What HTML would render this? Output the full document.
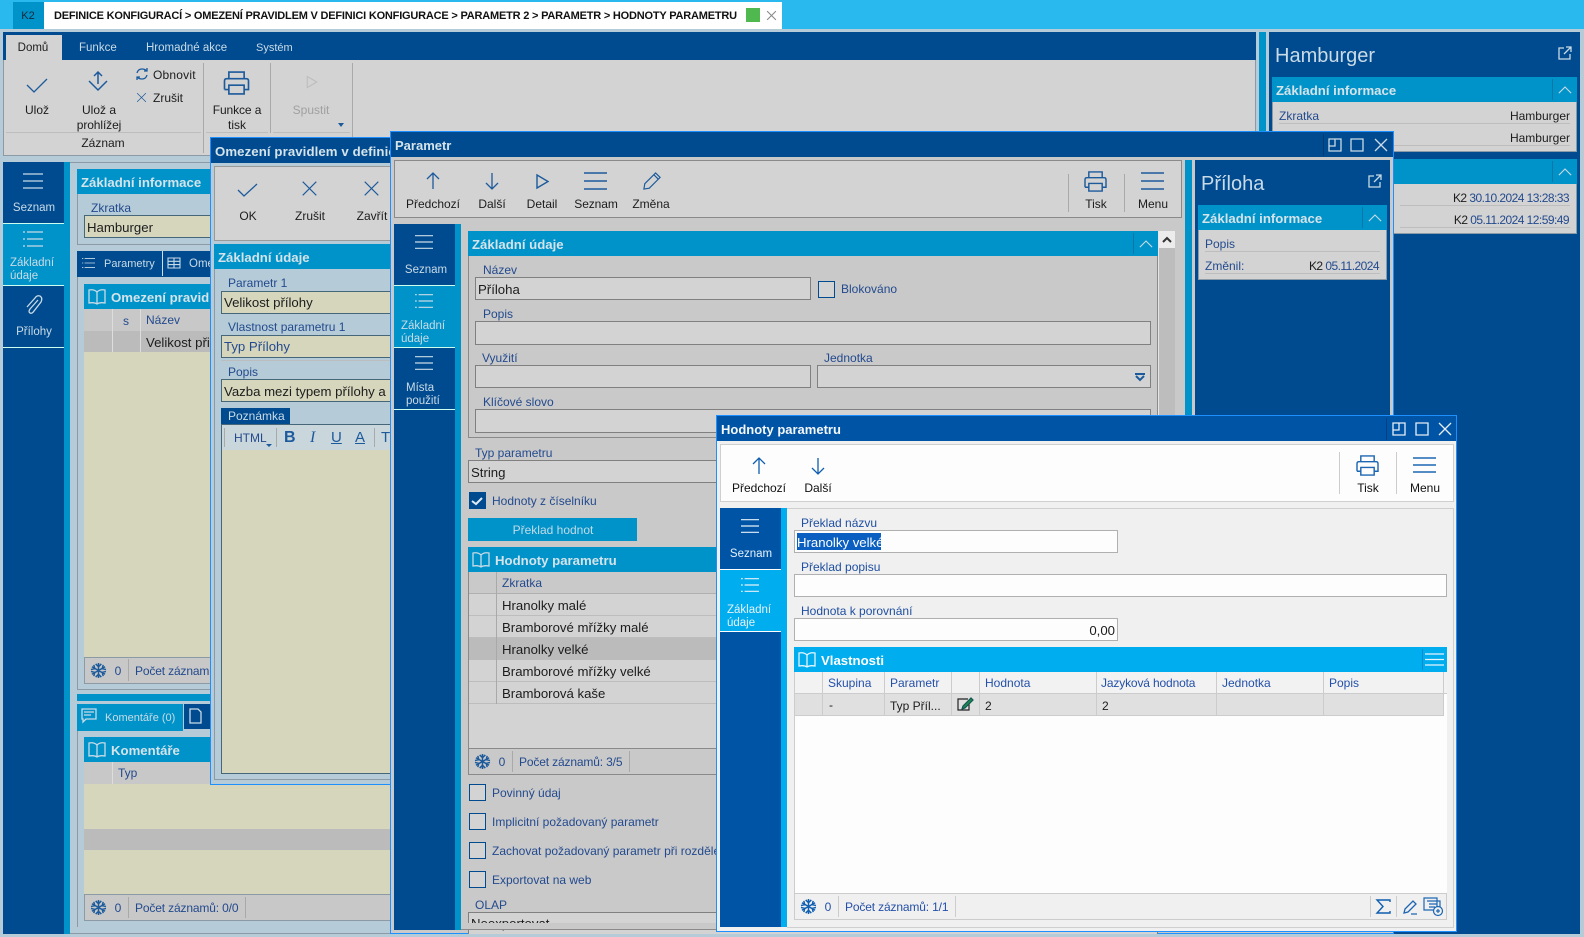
<!DOCTYPE html>
<html lang="cs"><head><meta charset="utf-8"><title>K2</title>
<style>
html,body{margin:0;padding:0;width:1584px;height:937px;overflow:hidden;background:#b5cbd7;font-family:"Liberation Sans",sans-serif}
div,span.t{position:absolute;box-sizing:border-box}
.w{left:0;top:0;width:1584px;height:937px}
.t{position:absolute;white-space:nowrap;font-size:12px;line-height:16px;color:#1c1c1c}
.c{transform:translateX(-50%)}
.r{transform:translateX(-100%)}
.l{color:#234a8e}
.hw{color:#c9dbe6}
.h{font-weight:bold;font-size:13.2px;color:#d5e3ea;margin-top:1px}
.v{font-size:13.2px}
.n{letter-spacing:-.55px}
.f{letter-spacing:-.15px}
svg{position:absolute;overflow:visible;fill:none;stroke:#1c5a9c;stroke-width:1.3}
.wt{stroke:#c9dbe6}
.wh{stroke:#fff}
.sn{stroke-width:1.6}
.in{background:#d6d6bd;border:1px solid #46677a}
.ig{background:#d3d3d3;border:1px solid #808080}
.iw{background:#fdfdfd;border:1px solid #b0b0b0}
.cy{background:#0093c9}
.db{background:#004a8f}
.ck{width:17px;height:17px;background:#d3d3d3;border:1px solid #004a8f}
.ln{height:1px;background:#bdbdbd}
.v1{width:1px;background:#a9a9a9}
</style></head><body>
<svg width="0" height="0" style="position:absolute"><defs>
<symbol id="check" viewBox="0 0 20 20" overflow="visible"><path d="M0 9 L7 16 L20 3"/></symbol>
<symbol id="x" viewBox="0 0 20 20" overflow="visible"><path d="M2 2 L18 18 M18 2 L2 18"/></symbol>
<symbol id="up" viewBox="0 0 20 20" overflow="visible"><path d="M10 1 V18 M4 7 L10 1 L16 7"/></symbol>
<symbol id="down" viewBox="0 0 20 20" overflow="visible"><path d="M10 1 V18 M4 12 L10 18 L16 12"/></symbol>
<symbol id="play" viewBox="0 0 20 20" overflow="visible"><path d="M4 3 L16 10 L4 17 Z"/></symbol>
<symbol id="ham" viewBox="0 0 20 20" overflow="visible"><path d="M0 3 H20 M0 10 H20 M0 17 H20"/></symbol>
<symbol id="list" viewBox="0 0 20 20" overflow="visible"><path d="M4 3 H20 M4 10 H20 M4 17 H20 M0 3 H2 M0 10 H2 M0 17 H2"/></symbol>
<symbol id="pen" viewBox="0 0 20 20" overflow="visible"><path d="M1 19 L2 13 L14 1 L19 6 L7 18 Z M12 3 L17 8"/></symbol>
<symbol id="print" viewBox="0 0 24 22" overflow="visible"><path d="M5 7 V1 H19 V7 M1 17 V9 Q1 7 3 7 H21 Q23 7 23 9 V17 H19 M5 17 H1 M5 13 H19 V21 H5 Z"/></symbol>
<symbol id="pop" viewBox="0 0 14 14" overflow="visible"><path d="M6 2 H1 V13 H12 V8 M8 1 H13 V6 M13 1 L6 8"/></symbol>
<symbol id="chev" viewBox="0 0 14 8" overflow="visible"><path d="M0 7 L7 0 L14 7"/></symbol>
<symbol id="book" viewBox="0 0 18 17" overflow="visible"><path d="M9 3 Q6 0 1 1 V14 Q6 13 9 15 Q12 13 17 14 V1 Q12 0 9 3 V15"/></symbol>
<symbol id="snow" viewBox="0 0 16 16" overflow="visible"><path d="M8 0 V16 M1 4 L15 12 M15 4 L1 12 M5 1 L8 4 L11 1 M5 15 L8 12 L11 15 M0 7 L4 6 L3 2 M16 7 L12 6 L13 2 M0 9 L4 10 L3 14 M16 9 L12 10 L13 14"/></symbol>
</defs></svg>

<!-- top bar -->
<div style="left:0;top:0;width:1584px;height:29px;background:#29b9ee"></div>
<div style="left:13px;top:2px;width:31px;height:27px;background:#0093c9"></div>
<span class="t c" style="left:28px;top:8px;font-size:11px;color:#0b2a40">K2</span>
<div style="left:44px;top:2px;width:738px;height:27px;background:#fff"></div>
<span class="t" style="left:54px;top:8px;font-weight:bold;font-size:11px;color:#111;letter-spacing:-.2px">DEFINICE KONFIGURACÍ &gt; OMEZENÍ PRAVIDLEM V DEFINICI KONFIGURACE &gt; PARAMETR 2 &gt; PARAMETR &gt; HODNOTY PARAMETRU</span>
<div style="left:746px;top:8px;width:14px;height:14px;background:#4fb84f"></div>
<svg style="left:766px;top:10px;stroke:#8a8a8a;stroke-width:2" width="11" height="11"><use href="#x"/></svg>

<!-- ribbon -->
<div class="db" style="left:3px;top:32px;width:1253px;height:28px"></div>
<div style="left:6px;top:35px;width:56px;height:25px;background:#d3d3d3"></div>
<span class="t c" style="left:33px;top:40px;font-size:11.5px">Domů</span>
<span class="t hw" style="left:79px;top:40px;font-size:11.5px">Funkce</span>
<span class="t hw" style="left:146px;top:40px;font-size:11.5px">Hromadné akce</span>
<span class="t hw" style="left:256px;top:40px;font-size:11px">Systém</span>
<div style="left:3px;top:60px;width:1253px;height:96px;background:#d3d3d3;border:1px solid #8b9aa4;border-top:0"></div>
<div class="v1" style="left:203px;top:63px;height:90px"></div>
<div class="v1" style="left:270px;top:63px;height:70px"></div>
<div class="v1" style="left:352px;top:63px;height:90px"></div>
<div class="ln" style="left:6px;top:132px;width:195px"></div>
<div class="ln" style="left:206px;top:132px;width:62px"></div>
<div class="ln" style="left:273px;top:132px;width:77px"></div>
<svg style="left:27px;top:76px" width="20" height="20"><use href="#check"/></svg>
<span class="t c" style="left:37px;top:102px">Ulož</span>
<svg style="left:88px;top:71px;stroke-width:1.5" width="20" height="20"><path d="M10 1 V13 M6 5 L10 1 L14 5 M1 10 L10 19 L19 10"/></svg>
<span class="t c" style="left:99px;top:102px">Ulož a</span>
<span class="t c" style="left:99px;top:117px;letter-spacing:-.1px">prohlížej</span>
<svg style="left:136px;top:68px" width="12" height="12"><path d="M1 5 Q2 1 6 1 Q9 1 11 3 M11 0 V3 H8 M11 7 Q10 11 6 11 Q3 11 1 9 M1 12 V9 H4"/></svg>
<span class="t" style="left:153px;top:67px;letter-spacing:.2px">Obnovit</span>
<svg style="left:136px;top:92px" width="11" height="11"><use href="#x"/></svg>
<span class="t" style="left:153px;top:90px">Zrušit</span>
<span class="t c" style="left:103px;top:135px">Záznam</span>
<svg style="left:223px;top:71px;stroke-width:1.5" width="27" height="24"><use href="#print"/></svg>
<span class="t c" style="left:237px;top:102px;letter-spacing:-.1px">Funkce a</span>
<span class="t c" style="left:237px;top:117px">tisk</span>
<svg style="left:304px;top:74px;stroke:#bcbcbc" width="16" height="16"><use href="#play"/></svg>
<span class="t c" style="left:311px;top:102px;color:#a0a0a0">Spustit</span>
<div style="left:338px;top:123px;width:0;height:0;border:3px solid transparent;border-top:4px solid #1c5a9c;border-bottom:0"></div>

<!-- main left -->
<div style="left:3px;top:162px;width:61px;height:772px;background:#004a8f"></div>
<div class="cy" style="left:64px;top:162px;width:6px;height:772px"></div>
<div style="left:70px;top:162px;width:1186px;height:772px;border:1px solid #8b9aa4;border-left:0"></div>
<div style="left:3px;top:223px;width:61px;height:1px;background:#cfe"></div>
<div class="cy" style="left:3px;top:224px;width:61px;height:61px"></div>
<div style="left:3px;top:285px;width:61px;height:1px;background:#cfe"></div>
<div style="left:3px;top:347px;width:61px;height:1px;background:#cfe"></div>
<svg class="wt" style="left:23px;top:171px" width="20" height="20"><use href="#ham"/></svg>
<span class="t c hw" style="left:34px;top:200px;font-size:11.5px">Seznam</span>
<svg class="wt" style="left:23px;top:229px" width="20" height="20"><use href="#list"/></svg>
<span class="t hw" style="left:10px;top:257px;font-size:11.5px;line-height:13px">Základní<br>údaje</span>
<svg class="wt" style="left:25px;top:295px" width="17" height="20"><path d="M13 5 L5 14 Q3 17 5 18 Q7 19 9 16 L16 7 Q18 3 15 1 Q12 0 10 3 L2 12"/></svg>
<span class="t c hw" style="left:34px;top:324px;font-size:11.5px">Přílohy</span>

<div class="cy" style="left:77px;top:169px;width:140px;height:25px"></div>
<span class="t h" style="left:81px;top:174px">Základní informace</span>
<div style="left:77px;top:194px;width:140px;height:51px;border:1px solid #8b9aa4;border-top:0"></div>
<span class="t l" style="left:91px;top:200px">Zkratka</span>
<div class="in" style="left:84px;top:215px;width:130px;height:23px"></div>
<span class="t v" style="left:87px;top:220px">Hamburger</span>
<div class="db" style="left:77px;top:251px;width:140px;height:26px"></div>
<div style="left:162px;top:251px;width:1px;height:25px;background:#d0e0ea"></div>
<svg class="wt" style="left:82px;top:256px" width="13" height="14"><use href="#list"/></svg>
<span class="t hw" style="left:104px;top:256px;font-size:11px">Parametry</span>
<svg class="wt" style="left:168px;top:258px;stroke-width:1.1" width="12" height="10"><path d="M0 0 H12 V10 H0 Z M0 3.3 H12 M0 6.6 H12 M6 0 V10"/></svg>
<span class="t hw" style="left:189px;top:256px;font-size:11.5px">Ome</span>
<div style="left:77px;top:277px;width:140px;height:413px;border-left:1px solid #8b9aa4;border-bottom:1px solid #8b9aa4"></div>
<div class="cy" style="left:84px;top:284px;width:130px;height:25px"></div>
<svg class="wt" style="left:88px;top:289px" width="18" height="17"><use href="#book"/></svg>
<span class="t h" style="left:111px;top:289px">Omezení pravidl</span>
<div style="left:84px;top:309px;width:130px;height:22px;background:#c8c8c8"></div>
<div style="left:84px;top:331px;width:130px;height:21px;background:#bbb"></div>
<div style="left:112px;top:309px;width:1px;height:43px;background:#ddd"></div>
<div style="left:140px;top:309px;width:1px;height:43px;background:#ddd"></div>
<span class="t c l" style="left:126px;top:313px">s</span>
<span class="t l" style="left:146px;top:312px">Název</span>
<span class="t v" style="left:146px;top:335px">Velikost při</span>
<div style="left:84px;top:352px;width:130px;height:305px;background:#d6d6bd"></div>
<div style="left:84px;top:657px;width:130px;height:27px;background:#c8c8c8;border:1px solid #8b9aa4"></div>
<svg class="sn" style="left:91px;top:663px" width="15" height="15"><use href="#snow"/></svg>
<span class="t c l" style="left:118px;top:663px">0</span>
<div class="v1" style="left:128px;top:659px;height:22px"></div>
<span class="t l f" style="left:135px;top:663px">Počet záznamů</span>
<div class="cy" style="left:77px;top:694px;width:140px;height:7px"></div>
<div class="cy" style="left:77px;top:704px;width:106px;height:27px"></div>
<div class="db" style="left:184px;top:704px;width:33px;height:25px"></div>
<svg class="wt" style="left:81px;top:709px" width="15" height="13"><path d="M1 0 H15 V10 H5 L2 13 V10 H1 Z M3 3 H13 M3 6 H10"/></svg>
<span class="t hw" style="left:105px;top:710px;font-size:11px">Komentáře (0)</span>
<svg class="wt" style="left:190px;top:709px" width="11" height="14"><path d="M0 0 H8 L11 3 V14 H0 Z"/></svg>
<div style="left:77px;top:731px;width:1px;height:196px;background:#8b9aa4"></div>
<div class="cy" style="left:84px;top:737px;width:130px;height:25px"></div>
<svg class="wt" style="left:88px;top:742px" width="18" height="17"><use href="#book"/></svg>
<span class="t h" style="left:111px;top:742px">Komentáře</span>
<div class="cy" style="left:214px;top:784px;width:176px;height:0"></div>
<div style="left:84px;top:762px;width:306px;height:22px;background:#c8c8c8"></div>
<div style="left:112px;top:762px;width:1px;height:22px;background:#ddd"></div>
<span class="t l" style="left:118px;top:765px">Typ</span>
<div style="left:84px;top:784px;width:306px;height:110px;background:#d6d6bd"></div>
<div style="left:84px;top:829px;width:306px;height:21px;background:#bbb"></div>
<div style="left:84px;top:894px;width:306px;height:27px;background:#c8c8c8;border:1px solid #8b9aa4;border-right:0"></div>
<svg class="sn" style="left:91px;top:900px" width="15" height="15"><use href="#snow"/></svg>
<span class="t c l" style="left:118px;top:900px">0</span>
<div class="v1" style="left:128px;top:897px;height:21px"></div>
<span class="t l f" style="left:135px;top:900px">Počet záznamů: 0/0</span>
<div class="v1" style="left:245px;top:897px;height:21px"></div>

<!-- Hamburger panel -->
<div class="cy" style="left:1259px;top:32px;width:7px;height:902px"></div>
<div class="db" style="left:1269px;top:32px;width:311px;height:902px"></div>
<span class="t" style="left:1275px;top:44px;font-size:20px;line-height:24px;color:#c9dbe6">Hamburger</span>
<svg class="wt" style="left:1558px;top:46px" width="14" height="14"><use href="#pop"/></svg>
<div class="cy" style="left:1272px;top:77px;width:305px;height:25px"></div>
<span class="t h" style="left:1276px;top:82px">Základní informace</span>
<div style="left:1552px;top:79px;width:1px;height:21px;background:#0b77a8"></div>
<svg class="wt" style="left:1558px;top:87px" width="14" height="7"><use href="#chev"/></svg>
<div style="left:1272px;top:102px;width:305px;height:50px;background:#d3d3d3;border:1px solid #8b9aa4;border-top:0"></div>
<span class="t l" style="left:1279px;top:108px">Zkratka</span>
<span class="t r" style="left:1570px;top:108px">Hamburger</span>
<div class="ln" style="left:1279px;top:123px;width:291px"></div>
<span class="t r" style="left:1570px;top:130px">Hamburger</span>
<div class="ln" style="left:1279px;top:145px;width:291px"></div>
<div class="cy" style="left:1272px;top:159px;width:305px;height:25px"></div>
<div style="left:1552px;top:161px;width:1px;height:21px;background:#0b77a8"></div>
<svg class="wt" style="left:1558px;top:169px" width="14" height="7"><use href="#chev"/></svg>
<div style="left:1272px;top:184px;width:305px;height:50px;background:#d3d3d3;border:1px solid #8b9aa4;border-top:0"></div>
<span class="t r n" style="left:1569px;top:190px">K2 <span style="color:#234a8e">30.10.2024 13:28:33</span></span>
<div class="ln" style="left:1400px;top:205px;width:170px"></div>
<span class="t r n" style="left:1569px;top:212px">K2 <span style="color:#234a8e">05.11.2024 12:59:49</span></span>
<div class="ln" style="left:1400px;top:227px;width:170px"></div>

<!-- Omezeni window -->
<div class="w" style="clip-path:inset(137px 1193px 152px 210px)">
<div style="left:210px;top:137px;width:200px;height:648px;background:#b5cbd7;border:1px solid #1e8fff"></div>
<div class="db" style="left:211px;top:138px;width:198px;height:25px"></div>
<span class="t h" style="left:215px;top:143px;letter-spacing:.1px">Omezení pravidlem v definici</span>
<div style="left:214px;top:166px;width:190px;height:75px;background:#d3d3d3;border:1px solid #9a9a9a"></div>
<svg style="left:238px;top:183px" width="20" height="14"><path d="M0 7 L6 13 L19 1"/></svg>
<span class="t c" style="left:248px;top:208px">OK</span>
<svg style="left:301px;top:180px" width="17" height="17"><use href="#x"/></svg>
<span class="t c" style="left:310px;top:208px">Zrušit</span>
<svg style="left:363px;top:180px" width="17" height="17"><use href="#x"/></svg>
<span class="t c" style="left:372px;top:208px">Zavřít</span>
<div class="cy" style="left:214px;top:244px;width:190px;height:25px"></div>
<span class="t h" style="left:218px;top:249px">Základní údaje</span>
<div style="left:214px;top:269px;width:190px;height:511px;border:1px solid #8b9aa4;border-top:0"></div>
<span class="t l" style="left:228px;top:275px">Parametr 1</span>
<div class="in" style="left:221px;top:291px;width:180px;height:23px"></div>
<span class="t v" style="left:224px;top:295px">Velikost přílohy</span>
<span class="t l" style="left:228px;top:319px">Vlastnost parametru 1</span>
<div class="in" style="left:221px;top:335px;width:180px;height:23px"></div>
<span class="t v l" style="left:224px;top:339px">Typ Přílohy</span>
<div class="ln" style="left:221px;top:360px;width:180px"></div>
<span class="t l" style="left:228px;top:364px">Popis</span>
<div class="in" style="left:221px;top:379px;width:180px;height:23px"></div>
<span class="t v" style="left:224px;top:384px">Vazba mezi typem přílohy a</span>
<div class="db" style="left:221px;top:408px;width:69px;height:16px"></div>
<span class="t hw" style="left:228px;top:408px">Poznámka</span>
<div style="left:221px;top:424px;width:180px;height:350px;background:#d6d6bd;border:1px solid #46677a"></div>
<div style="left:222px;top:425px;width:178px;height:25px;background:#c9d6dc"></div>
<div class="v1" style="left:224px;top:428px;height:19px"></div>
<span class="t l" style="left:234px;top:430px">HTML</span>
<div style="left:266px;top:444px;width:0;height:0;border:3px solid transparent;border-top:3px solid #1c5a9c;border-bottom:0"></div>
<div class="v1" style="left:276px;top:428px;height:19px"></div>
<span class="t" style="left:284px;top:430px;font-weight:bold;font-size:16px;color:#1c5a9c">B</span>
<span class="t" style="left:310px;top:430px;font-style:italic;font-size:16px;font-family:'Liberation Serif',serif;color:#1c5a9c">I</span>
<span class="t" style="left:331px;top:430px;text-decoration:underline;font-size:15px;color:#1c5a9c">U</span>
<span class="t" style="left:355px;top:430px;text-decoration:underline;font-size:15px;color:#1c5a9c">A</span>
<div class="v1" style="left:374px;top:428px;height:19px"></div>
<span class="t" style="left:381px;top:430px;font-size:15px;color:#1c5a9c">T</span>
</div>

<!-- Parametr window -->
<div class="w" style="clip-path:inset(131px 190px 3px 390px)">
<div style="left:390px;top:131px;width:1004px;height:803px;background:#c9c9c9;border:1px solid #1e8fff"></div>
<div class="db" style="left:391px;top:132px;width:1002px;height:25px"></div>
<span class="t h" style="left:395px;top:137px;font-size:13px">Parametr</span>
<div style="left:1323px;top:134px;width:1px;height:22px;background:#003a70"></div>
<svg class="wt" style="left:1329px;top:139px" width="12" height="12"><path d="M0 0 H12 V12 H0 Z M0 7 H6 V0"/></svg>
<svg class="wt" style="left:1351px;top:139px" width="12" height="12"><path d="M0 0 H12 V12 H0 Z"/></svg>
<svg class="wt" style="left:1375px;top:139px" width="12" height="12"><path d="M0 0 L12 12 M12 0 L0 12"/></svg>
<div style="left:394px;top:160px;width:788px;height:58px;background:#d3d3d3;border:1px solid #8a8a8a"></div>
<svg style="left:426px;top:173px" width="15" height="16"><path d="M7 0 V16 M1 6 L7 0 L13 6"/></svg>
<span class="t c" style="left:433px;top:196px">Předchozí</span>
<svg style="left:485px;top:173px" width="15" height="16"><path d="M7 0 V16 M1 10 L7 16 L13 10"/></svg>
<span class="t c" style="left:492px;top:196px">Další</span>
<svg style="left:536px;top:174px;stroke-width:1.4" width="13" height="15"><path d="M1 1 L12 7.5 L1 14 Z"/></svg>
<span class="t c" style="left:542px;top:196px">Detail</span>
<svg style="left:584px;top:171px;stroke-width:1.5" width="23" height="20"><path d="M0 2 H23 M0 10 H23 M0 18 H23"/></svg>
<span class="t c" style="left:596px;top:196px;letter-spacing:-.1px">Seznam</span>
<svg style="left:643px;top:172px" width="18" height="18"><use href="#pen"/></svg>
<span class="t c" style="left:651px;top:196px">Změna</span>
<div class="v1" style="left:1068px;top:174px;height:38px"></div>
<svg style="left:1084px;top:171px;stroke-width:1.5" width="23" height="21"><use href="#print"/></svg>
<span class="t c" style="left:1096px;top:196px">Tisk</span>
<div class="v1" style="left:1124px;top:174px;height:38px"></div>
<svg style="left:1141px;top:171px;stroke-width:1.5" width="23" height="20"><path d="M0 2 H23 M0 10 H23 M0 18 H23"/></svg>
<span class="t c" style="left:1153px;top:196px">Menu</span>

<div class="cy" style="left:1185px;top:160px;width:7px;height:770px"></div>
<div class="db" style="left:1195px;top:160px;width:195px;height:770px"></div>
<span class="t" style="left:1201px;top:172px;font-size:20px;line-height:24px;color:#c9dbe6">Příloha</span>
<svg class="wt" style="left:1368px;top:174px" width="14" height="14"><use href="#pop"/></svg>
<div class="cy" style="left:1198px;top:205px;width:189px;height:25px"></div>
<span class="t h" style="left:1202px;top:210px">Základní informace</span>
<div style="left:1362px;top:207px;width:1px;height:21px;background:#0b77a8"></div>
<svg class="wt" style="left:1368px;top:215px" width="14" height="7"><use href="#chev"/></svg>
<div style="left:1198px;top:230px;width:189px;height:50px;background:#d3d3d3;border:1px solid #8b9aa4;border-top:0"></div>
<span class="t l" style="left:1205px;top:236px">Popis</span>
<div class="ln" style="left:1205px;top:251px;width:175px"></div>
<span class="t l" style="left:1205px;top:258px">Změnil:</span>
<span class="t r n" style="left:1379px;top:258px">K2 <span style="color:#234a8e">05.11.2024</span></span>
<div class="ln" style="left:1205px;top:273px;width:175px"></div>

<div class="db" style="left:394px;top:224px;width:61px;height:706px"></div>
<div class="cy" style="left:455px;top:224px;width:6px;height:706px"></div>
<div style="left:394px;top:285px;width:61px;height:1px;background:#cfe"></div>
<div class="cy" style="left:394px;top:286px;width:61px;height:61px"></div>
<div style="left:394px;top:347px;width:61px;height:1px;background:#cfe"></div>
<div style="left:394px;top:409px;width:61px;height:1px;background:#cfe"></div>
<svg class="wt" style="left:414px;top:233px" width="20" height="18"><use href="#ham"/></svg>
<span class="t c hw" style="left:426px;top:262px;font-size:11.5px">Seznam</span>
<svg class="wt" style="left:414px;top:292px" width="20" height="18"><use href="#list"/></svg>
<span class="t hw" style="left:401px;top:320px;font-size:11.5px;line-height:13px">Základní<br>údaje</span>
<svg class="wt" style="left:414px;top:354px" width="20" height="18"><use href="#ham"/></svg>
<span class="t hw" style="left:406px;top:382px;font-size:11.5px;line-height:13px">Místa<br>použití</span>

<div class="cy" style="left:468px;top:231px;width:690px;height:25px"></div>
<span class="t h" style="left:472px;top:236px">Základní údaje</span>
<div style="left:1133px;top:233px;width:1px;height:21px;background:#0b77a8"></div>
<svg class="wt" style="left:1139px;top:241px" width="14" height="7"><use href="#chev"/></svg>
<div style="left:1158px;top:231px;width:1px;height:699px;background:#e6e6e6"></div>
<div style="left:1159px;top:231px;width:16px;height:17px;background:#ececec"></div>
<div style="left:1159px;top:248px;width:16px;height:682px;background:#bdbdbd"></div>
<svg style="left:1163px;top:237px;stroke:#333;stroke-width:2" width="8" height="5"><path d="M0 5 L4 1 L8 5"/></svg>
<div style="left:468px;top:256px;width:690px;height:182px;border:1px solid #8a8a8a;border-top:0"></div>
<span class="t l" style="left:483px;top:262px">Název</span>
<div class="ig" style="left:475px;top:277px;width:336px;height:23px"></div>
<span class="t v" style="left:478px;top:282px">Příloha</span>
<div class="ck" style="left:818px;top:281px"></div>
<span class="t l" style="left:841px;top:281px">Blokováno</span>
<span class="t l" style="left:483px;top:306px">Popis</span>
<div class="ig" style="left:475px;top:321px;width:676px;height:24px"></div>
<span class="t l" style="left:482px;top:350px">Využití</span>
<div class="ig" style="left:475px;top:365px;width:336px;height:23px"></div>
<span class="t l" style="left:824px;top:350px">Jednotka</span>
<div class="ig" style="left:817px;top:365px;width:334px;height:23px"></div>
<svg style="left:1134px;top:373px;stroke-width:2" width="12" height="8"><path d="M1 1 H11 M2 3 L6 7 L10 3"/></svg>
<span class="t l" style="left:483px;top:394px">Klíčové slovo</span>
<div class="ig" style="left:475px;top:409px;width:676px;height:24px"></div>
<span class="t l" style="left:475px;top:445px">Typ parametru</span>
<div class="ig" style="left:468px;top:460px;width:690px;height:23px"></div>
<span class="t v" style="left:471px;top:465px">String</span>
<div class="ck" style="left:469px;top:492px;background:#004a8f"></div>
<svg style="left:472px;top:497px;stroke:#e0ecf5;stroke-width:2" width="11" height="8"><path d="M0 4 L4 7 L10 1"/></svg>
<span class="t l" style="left:492px;top:493px">Hodnoty z číselníku</span>
<div class="cy" style="left:468px;top:518px;width:169px;height:23px"></div>
<span class="t c" style="left:553px;top:522px;color:#c2dbe7">Překlad hodnot</span>
<div class="cy" style="left:468px;top:547px;width:690px;height:25px"></div>
<svg class="wt" style="left:472px;top:552px" width="18" height="17"><use href="#book"/></svg>
<span class="t h" style="left:495px;top:552px">Hodnoty parametru</span>
<div style="left:468px;top:572px;width:690px;height:176px;background:#d3d3d3;border-left:1px solid #8a8a8a"></div>
<div style="left:469px;top:572px;width:689px;height:22px;background:#c9c9c9;border-bottom:1px solid #b0b0b0"></div>
<div style="left:469px;top:638px;width:689px;height:22px;background:#bbb"></div>
<div class="ln" style="left:469px;top:615px;width:689px"></div>
<div class="ln" style="left:469px;top:637px;width:689px"></div>
<div class="ln" style="left:469px;top:681px;width:689px"></div>
<div class="ln" style="left:469px;top:703px;width:689px"></div>
<div class="v1" style="left:496px;top:572px;height:132px"></div>
<span class="t l" style="left:502px;top:575px">Zkratka</span>
<span class="t v" style="left:502px;top:598px">Hranolky malé</span>
<span class="t v" style="left:502px;top:620px">Bramborové mřížky malé</span>
<span class="t v" style="left:502px;top:642px">Hranolky velké</span>
<span class="t v" style="left:502px;top:664px">Bramborové mřížky velké</span>
<span class="t v" style="left:502px;top:686px">Bramborová kaše</span>
<div style="left:468px;top:748px;width:690px;height:27px;background:#c9c9c9;border:1px solid #8a8a8a"></div>
<svg class="sn" style="left:475px;top:754px" width="15" height="15"><use href="#snow"/></svg>
<span class="t c l" style="left:502px;top:754px">0</span>
<div class="v1" style="left:512px;top:751px;height:21px"></div>
<span class="t l f" style="left:519px;top:754px">Počet záznamů: 3/5</span>
<div class="v1" style="left:629px;top:751px;height:21px"></div>
<div class="ck" style="left:469px;top:784px"></div>
<span class="t l" style="left:492px;top:785px">Povinný údaj</span>
<div class="ck" style="left:469px;top:813px"></div>
<span class="t l" style="left:492px;top:814px">Implicitní požadovaný parametr</span>
<div class="ck" style="left:469px;top:842px"></div>
<span class="t l" style="left:492px;top:843px">Zachovat požadovaný parametr při rozdělení</span>
<div class="ck" style="left:469px;top:871px"></div>
<span class="t l" style="left:492px;top:872px">Exportovat na web</span>
<span class="t l" style="left:475px;top:897px">OLAP</span>
<div class="ig" style="left:468px;top:912px;width:690px;height:24px"></div>
<span class="t v" style="left:471px;top:916px">Neexportovat</span>
<div style="left:461px;top:923px;width:697px;height:7px;background:#c9c9c9;border-bottom:1px solid #8a8a8a"></div>
</div>

<!-- Hodnoty window -->
<div class="w" style="clip-path:inset(415px 127px 5px 716px)">
<div style="left:716px;top:415px;width:741px;height:517px;background:#f0f0f0;border:1px solid #1e8fff"></div>
<div style="left:717px;top:416px;width:739px;height:25px;background:#0054a6"></div>
<span class="t" style="left:721px;top:422px;font-weight:bold;font-size:13px;color:#f4f8fb">Hodnoty parametru</span>
<div style="left:1386px;top:418px;width:1px;height:22px;background:#003f80"></div>
<svg class="wh" style="left:1393px;top:423px;stroke:#e6eef6" width="12" height="12"><path d="M0 0 H12 V12 H0 Z M0 7 H6 V0"/></svg>
<svg class="wh" style="left:1416px;top:423px;stroke:#e6eef6" width="12" height="12"><path d="M0 0 H12 V12 H0 Z"/></svg>
<svg class="wh" style="left:1439px;top:423px;stroke:#e6eef6" width="12" height="12"><path d="M0 0 L12 12 M12 0 L0 12"/></svg>
<div style="left:720px;top:444px;width:734px;height:58px;background:#fdfdfd;border:1px solid #cfcfcf"></div>
<svg style="left:752px;top:458px;stroke:#0f5eb0" width="15" height="16"><path d="M7 0 V16 M1 6 L7 0 L13 6"/></svg>
<span class="t c" style="left:759px;top:480px;color:#111">Předchozí</span>
<svg style="left:811px;top:458px;stroke:#0f5eb0" width="15" height="16"><path d="M7 0 V16 M1 10 L7 16 L13 10"/></svg>
<span class="t c" style="left:818px;top:480px;color:#111">Další</span>
<div style="left:1339px;top:452px;width:1px;height:42px;background:#ccc"></div>
<svg style="left:1356px;top:455px;stroke:#1d66b3;stroke-width:1.5" width="23" height="21"><use href="#print"/></svg>
<span class="t c" style="left:1368px;top:480px;color:#111">Tisk</span>
<div style="left:1396px;top:452px;width:1px;height:42px;background:#ccc"></div>
<svg style="left:1413px;top:457px;stroke:#1d66b3;stroke-width:1.5" width="23" height="17"><path d="M0 1 H23 M0 8 H23 M0 15 H23"/></svg>
<span class="t c" style="left:1425px;top:480px;color:#111">Menu</span>
<div style="left:720px;top:508px;width:61px;height:419px;background:#0054a6"></div>
<div style="left:781px;top:508px;width:6px;height:419px;background:#00adef"></div>
<div style="left:787px;top:508px;width:667px;height:420px;border:1px solid #cfcfcf;border-left:0"></div>
<div style="left:720px;top:569px;width:61px;height:1px;background:#fff"></div>
<div style="left:720px;top:570px;width:61px;height:61px;background:#00adef"></div>
<div style="left:720px;top:631px;width:61px;height:1px;background:#fff"></div>
<svg class="wh" style="left:740px;top:517px;stroke:#e6f1fa" width="20" height="18"><use href="#ham"/></svg>
<span class="t c" style="left:751px;top:546px;font-size:11.5px;color:#e6f1fa">Seznam</span>
<svg class="wh" style="left:740px;top:576px;stroke:#e6f1fa" width="20" height="18"><use href="#list"/></svg>
<span class="t" style="left:727px;top:604px;font-size:11.5px;line-height:13px;color:#e6f1fa">Základní<br>údaje</span>
<span class="t l" style="left:801px;top:515px;color:#1f4fa0">Překlad názvu</span>
<div class="iw" style="left:794px;top:530px;width:324px;height:23px"></div>
<div style="left:797px;top:533px;width:84px;height:17px;background:#0a5fc0"></div>
<span class="t v" style="left:797px;top:535px;color:#fff">Hranolky velké</span>
<span class="t l" style="left:801px;top:559px;color:#1f4fa0">Překlad popisu</span>
<div class="iw" style="left:794px;top:574px;width:653px;height:23px"></div>
<span class="t l" style="left:801px;top:603px;color:#1f4fa0">Hodnota k porovnání</span>
<div class="iw" style="left:794px;top:618px;width:324px;height:23px"></div>
<span class="t v r" style="left:1115px;top:623px">0,00</span>
<div style="left:794px;top:647px;width:653px;height:25px;background:#00adef"></div>
<svg class="wh" style="left:798px;top:652px;stroke:#e6f6fd" width="18" height="17"><use href="#book"/></svg>
<span class="t" style="left:821px;top:653px;font-weight:bold;font-size:13.2px;color:#fff">Vlastnosti</span>
<div style="left:1422px;top:649px;width:1px;height:21px;background:#0b8ccc"></div>
<svg class="wh" style="left:1425px;top:653px;stroke:#e6f6fd" width="19" height="13"><path d="M0 1 H19 M0 6.5 H19 M0 12 H19"/></svg>
<div style="left:794px;top:672px;width:653px;height:221px;background:#fdfdfd;border-left:1px solid #ccc"></div>
<div style="left:795px;top:672px;width:652px;height:22px;background:#f2f2f2;border-bottom:1px solid #ccc"></div>
<div style="left:795px;top:694px;width:648px;height:22px;background:#e0e0e0;border-bottom:1px solid #ccc"></div>
<div style="left:822px;top:672px;width:1px;height:44px;background:#ccc"></div>
<div style="left:884px;top:672px;width:1px;height:44px;background:#ccc"></div>
<div style="left:951px;top:672px;width:1px;height:44px;background:#ccc"></div>
<div style="left:979px;top:672px;width:1px;height:44px;background:#ccc"></div>
<div style="left:1096px;top:672px;width:1px;height:44px;background:#ccc"></div>
<div style="left:1216px;top:672px;width:1px;height:44px;background:#ccc"></div>
<div style="left:1323px;top:672px;width:1px;height:44px;background:#ccc"></div>
<div style="left:1443px;top:672px;width:1px;height:44px;background:#ccc"></div>
<span class="t" style="left:828px;top:675px;color:#2450a8">Skupina</span>
<span class="t" style="left:890px;top:675px;color:#2450a8">Parametr</span>
<span class="t" style="left:985px;top:675px;color:#2450a8">Hodnota</span>
<span class="t f" style="left:1101px;top:675px;color:#2450a8">Jazyková hodnota</span>
<span class="t" style="left:1222px;top:675px;color:#2450a8">Jednotka</span>
<span class="t" style="left:1329px;top:675px;color:#2450a8">Popis</span>
<span class="t" style="left:829px;top:697px">-</span>
<span class="t" style="left:890px;top:698px">Typ Příl...</span>
<svg style="left:958px;top:698px;stroke:#222;stroke-width:1.2" width="15" height="13"><path d="M10 1 H0 V12 H11 V6"/><path d="M5 8 L13 0 L15 2 L7 10 L4 11 Z" fill="#1f8a4c" stroke="#155"/></svg>
<span class="t" style="left:985px;top:698px">2</span>
<span class="t" style="left:1102px;top:698px">2</span>
<div style="left:794px;top:893px;width:653px;height:27px;background:#f0f0f0;border:1px solid #ccc"></div>
<svg class="sn" style="left:801px;top:899px;stroke:#0f5eb0" width="15" height="15"><use href="#snow"/></svg>
<span class="t c" style="left:828px;top:899px;color:#2450a8">0</span>
<div style="left:838px;top:896px;width:1px;height:21px;background:#ccc"></div>
<span class="t f" style="left:845px;top:899px;color:#2450a8">Počet záznamů: 1/1</span>
<div style="left:955px;top:896px;width:1px;height:21px;background:#ccc"></div>
<div style="left:1370px;top:896px;width:1px;height:21px;background:#ccc"></div>
<svg style="left:1377px;top:900px;stroke:#0f5eb0;stroke-width:1.4" width="13" height="13"><path d="M13 2 V0 H0 L6 6.5 L0 13 H13 V11"/></svg>
<div style="left:1396px;top:896px;width:1px;height:21px;background:#ccc"></div>
<svg style="left:1403px;top:900px;stroke:#1d66b3" width="14" height="14"><path d="M1 13 L2 9 L10 1 L13 4 L5 12 Z M8 14 H14"/></svg>
<svg style="left:1424px;top:898px;stroke:#1d66b3;stroke-width:1.2" width="19" height="18"><path d="M0 0 H13 V12 H0 Z M3 3 H16 V11 M5 6 H13 M5 9 H11"/><circle cx="14" cy="13" r="4.5" fill="#f0f0f0"/><path d="M12 13 H16 M14 11 V15"/></svg>
</div>
</body></html>
